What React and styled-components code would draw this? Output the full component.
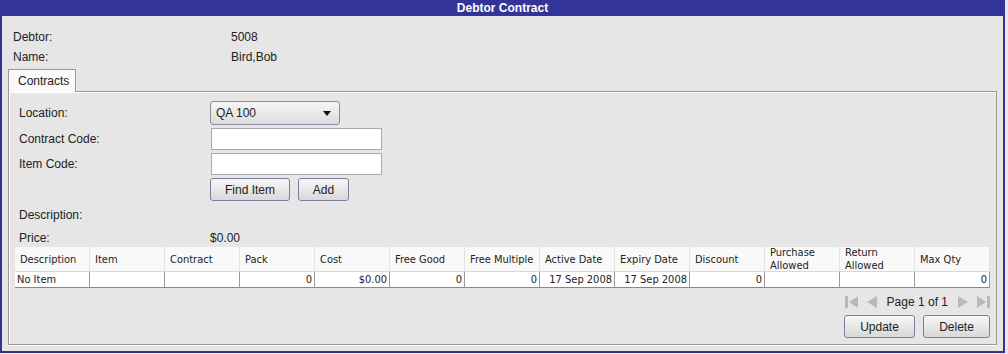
import React from "react";
import styled, { createGlobalStyle } from "styled-components";

const Global = createGlobalStyle`
  html, body { margin: 0; padding: 0; background: #e8e8e8; }
  body { font-family: "Liberation Sans", Arial, sans-serif; font-size: 12px; color: #222; }
`;

const Window = styled.div`
  width: 1005px;
  height: 353px;
  box-sizing: border-box;
  border: 2px solid #333399;
  border-top: none;
  background: #e6e6e6;
  display: flex;
  flex-direction: column;
`;

const TitleBar = styled.div`
  height: 16px;
  margin: 0 -2px;
  background: #333399;
  color: #fff;
  font-weight: bold;
  font-size: 12px;
  line-height: 16px;
  text-align: center;
`;

const Body = styled.div`
  flex: 1;
  display: flex;
  flex-direction: column;
  padding: 11px 6px 7px 6px;
`;

const InfoRow = styled.div`
  display: grid;
  grid-template-columns: 218px 1fr;
  height: 20px;
  align-items: center;
  padding-left: 5px;
`;

const Tabs = styled.div`
  display: flex;
  margin-top: 2px;
  position: relative;
  z-index: 1;
`;

const Tab = styled.div`
  height: 23px;
  box-sizing: border-box;
  padding: 0 6px 0 9px;
  display: flex;
  align-items: center;
  background: #fafafa;
  border: 1px solid #9a9a9a;
  border-bottom: none;
  margin-bottom: -1px;
`;

const Panel = styled.div`
  flex: 1;
  box-sizing: border-box;
  border: 1px solid #999;
  box-shadow: inset 1px 1px 0 #fff, 0 1px 0 #fff;
  display: flex;
  flex-direction: column;
  padding: 9px 6px 6px 6px;
`;

const Form = styled.div`
  display: grid;
  grid-template-columns: 191px 1fr;
  row-gap: 3px;
  align-items: center;
  padding-left: 4px;
`;

const Label = styled.div`
  height: ${(p) => p.$h || 22}px;
  display: flex;
  align-items: center;
`;

const Select = styled.div`
  width: 130px;
  height: 24px;
  box-sizing: border-box;
  border: 1px solid #8a8aa0;
  border-radius: 3px;
  background: linear-gradient(#f6f6f6, #dcdcdc);
  display: flex;
  align-items: center;
  justify-content: space-between;
  padding: 0 8px 0 5px;
`;

const Arrow = styled.span`
  width: 0;
  height: 0;
  border-left: 4px solid transparent;
  border-right: 4px solid transparent;
  border-top: 5px solid #111;
`;

const Input = styled.div`
  width: 171px;
  height: 22px;
  box-sizing: border-box;
  background: #fff;
  border: 1px solid #aaa;
  margin-left: 1px;
`;

const ButtonRow = styled.div`
  display: flex;
  gap: ${(p) => p.$gap || 8}px;
  justify-content: ${(p) => (p.$end ? "flex-end" : "flex-start")};
`;

const Button = styled.div`
  width: ${(p) => p.$w}px;
  height: 23px;
  box-sizing: border-box;
  border: 1px solid #7c7c9c;
  border-radius: 3px;
  background: linear-gradient(#f7f7f7, #d8d8d8);
  display: flex;
  align-items: center;
  justify-content: center;
`;

const Table = styled.div`
  display: grid;
  grid-template-columns: repeat(13, 75px);
  width: 976px;
  font-family: "DejaVu Sans Condensed", "DejaVu Sans", sans-serif;
  font-size: 11px;
  color: #222;
`;

const Th = styled.div`
  height: 25px;
  box-sizing: border-box;
  background: #f9f9f9;
  border-right: 1px solid #e2e2e2;
  border-bottom: 1px solid #d8d8d8;
  padding-left: 5px;
  display: flex;
  align-items: center;
  line-height: 13px;
`;

const Td = styled.div`
  height: 16px;
  box-sizing: border-box;
  background: #fff;
  border-right: 1px solid #999;
  border-bottom: 1px solid #888;
  padding: 0 2px;
  display: flex;
  align-items: center;
  justify-content: ${(p) => (p.$right ? "flex-end" : "flex-start")};
`;

const Pager = styled.div`
  display: flex;
  justify-content: flex-end;
  align-items: center;
  gap: 8px;
  height: 21px;
  margin-top: 3px;
  font-size: 12px;
`;

const PageText = styled.span`
  margin: 0 1px;
`;

const Spacer = styled.div`
  height: 3px;
`;

const Icon = ({ kind }) => {
  const c = "#b9b9b9";
  if (kind === "first")
    return (
      <svg width="13" height="12" viewBox="0 0 13 12">
        <rect x="0" y="0" width="3" height="12" fill={c} />
        <polygon points="13,0 13,12 4,6" fill={c} />
      </svg>
    );
  if (kind === "prev")
    return (
      <svg width="12" height="12" viewBox="0 0 12 12">
        <polygon points="11,0 11,12 1,6" fill={c} />
      </svg>
    );
  if (kind === "next")
    return (
      <svg width="12" height="12" viewBox="0 0 12 12">
        <polygon points="1,0 1,12 11,6" fill={c} />
      </svg>
    );
  return (
    <svg width="13" height="12" viewBox="0 0 13 12">
      <polygon points="0,0 0,12 9,6" fill={c} />
      <rect x="10" y="0" width="3" height="12" fill={c} />
    </svg>
  );
};

const headers = [
  "Description", "Item", "Contract", "Pack", "Cost", "Free Good", "Free Multiple",
  "Active Date", "Expiry Date", "Discount", "Purchase Allowed", "Return Allowed", "Max Qty",
];
const row = [
  ["No Item", false], ["", false], ["", false], ["0", true], ["$0.00", true], ["0", true],
  ["0", true], ["17 Sep 2008", true], ["17 Sep 2008", true], ["0", true], ["", false],
  ["", false], ["0", true],
];

export default function App() {
  return (
    <>
      <Global />
      <Window>
        <TitleBar>Debtor Contract</TitleBar>
        <Body>
          <InfoRow><span>Debtor:</span><span>5008</span></InfoRow>
          <InfoRow><span>Name:</span><span>Bird,Bob</span></InfoRow>
          <Tabs><Tab>Contracts</Tab></Tabs>
          <Panel>
            <Form>
              <Label $h={24}>Location:</Label>
              <Select><span>QA 100</span><Arrow /></Select>
              <Label>Contract Code:</Label>
              <Input />
              <Label>Item Code:</Label>
              <Input />
              <span />
              <ButtonRow>
                <Button $w={80}>Find Item</Button>
                <Button $w={51}>Add</Button>
              </ButtonRow>
              <Label $h={22}>Description:</Label>
              <span />
              <Label $h={18}>Price:</Label>
              <span>$0.00</span>
            </Form>
            <Table>
              {headers.map((h) => <Th key={h}>{h}</Th>)}
              {row.map(([v, r], i) => <Td key={i} $right={r}>{v}</Td>)}
            </Table>
            <Pager>
              <Icon kind="first" />
              <Icon kind="prev" />
              <PageText>Page 1 of 1</PageText>
              <Icon kind="next" />
              <Icon kind="last" />
            </Pager>
            <Spacer />
            <ButtonRow $end $gap={8}>
              <Button $w={71}>Update</Button>
              <Button $w={67}>Delete</Button>
            </ButtonRow>
          </Panel>
        </Body>
      </Window>
    </>
  );
}
